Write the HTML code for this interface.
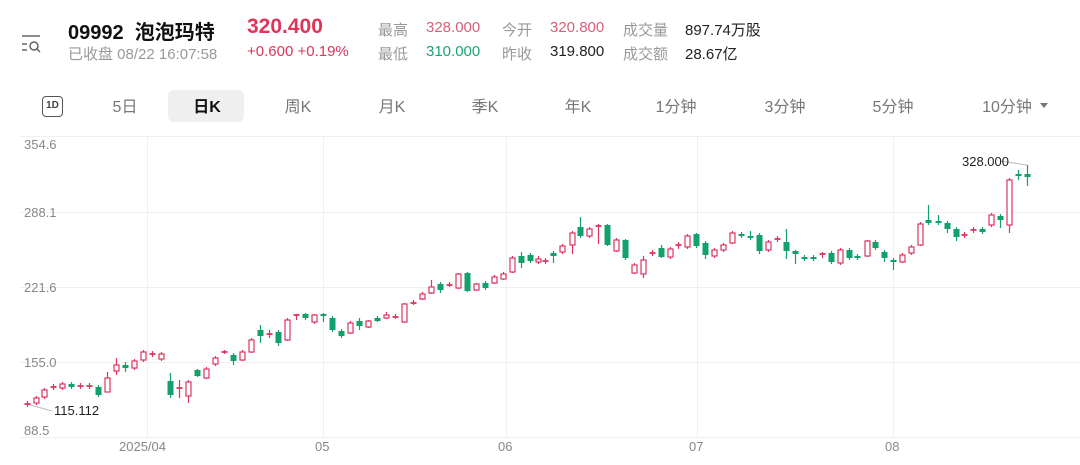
<!DOCTYPE html>
<html><head><meta charset="utf-8"><style>
*{margin:0;padding:0;box-sizing:border-box}
body{width:1080px;height:465px;background:#fff;font-family:"Liberation Sans","Noto Sans CJK SC",sans-serif;position:relative;overflow:hidden;color:#222}
.a{position:absolute;white-space:nowrap}
.g{color:#999}.red{color:#e0345a}.grn{color:#1aa474}
.tab{position:absolute;top:93px;font-size:16px;color:#777;transform:translateX(-50%)}
.ax{position:absolute;font-size:13px;color:#888}
</style></head><body>
<svg class="a" style="left:20px;top:34px" width="24" height="20" viewBox="0 0 24 20"><g stroke="#666" stroke-width="1.5" fill="none"><line x1="2" y1="2" x2="20" y2="2"/><line x1="2" y1="10" x2="7" y2="10"/><line x1="2" y1="16" x2="7" y2="16"/><circle cx="14" cy="12" r="4"/><line x1="17" y1="15" x2="20" y2="18"/></g></svg>
<div class="a" style="left:68px;top:16px;font-size:20px;font-weight:bold;color:#111">09992&nbsp; 泡泡玛特</div>
<div class="a red" style="left:247px;top:15px;font-size:21px;font-weight:bold">320.400</div>
<div class="a g" style="left:68px;top:43px;font-size:15px">已收盘 08/22 16:07:58</div>
<div class="a red" style="left:247px;top:43px;font-size:15px">+0.600 +0.19%</div>
<div class="a g" style="left:378px;top:19px;font-size:15px">最高</div>
<div class="a" style="left:426px;top:19px;font-size:15px;color:#d9607a">328.000</div>
<div class="a g" style="left:378px;top:43px;font-size:15px">最低</div>
<div class="a grn" style="left:426px;top:43px;font-size:15px">310.000</div>
<div class="a g" style="left:502px;top:19px;font-size:15px">今开</div>
<div class="a" style="left:550px;top:19px;font-size:15px;color:#d9607a">320.800</div>
<div class="a g" style="left:502px;top:43px;font-size:15px">昨收</div>
<div class="a" style="left:550px;top:43px;font-size:15px">319.800</div>
<div class="a g" style="left:623px;top:19px;font-size:15px">成交量</div>
<div class="a" style="left:685px;top:19px;font-size:15px">897.74万股</div>
<div class="a g" style="left:623px;top:43px;font-size:15px">成交额</div>
<div class="a" style="left:685px;top:43px;font-size:15px">28.67亿</div>
<div class="a" style="left:42px;top:96px;width:21px;height:21px;border:1.5px solid #555;border-radius:4px;font-size:10px;font-weight:bold;text-align:center;line-height:18px;color:#444">1D</div>
<div class="a" style="left:168px;top:90px;width:76px;height:32px;background:#efefef;border-radius:6px"></div>
<div class="tab" style="left:125px">5日</div>
<div class="tab" style="left:207px;color:#111;font-weight:bold">日K</div>
<div class="tab" style="left:298px">周K</div>
<div class="tab" style="left:392px">月K</div>
<div class="tab" style="left:485px">季K</div>
<div class="tab" style="left:578px">年K</div>
<div class="tab" style="left:676px">1分钟</div>
<div class="tab" style="left:785px">3分钟</div>
<div class="tab" style="left:893px">5分钟</div>
<div class="tab" style="left:1007px">10分钟</div>
<div class="a" style="left:1040px;top:103px;border-left:4px solid transparent;border-right:4px solid transparent;border-top:5px solid #777"></div>

<svg class="a" style="left:0;top:0" width="1080" height="465">
<g stroke="#f0f0f0" stroke-width="1">
<line x1="20" y1="136.5" x2="1080" y2="136.5"/><line x1="20" y1="212.5" x2="1080" y2="212.5"/><line x1="20" y1="287.5" x2="1080" y2="287.5"/><line x1="20" y1="362.5" x2="1080" y2="362.5"/><line x1="20" y1="437.5" x2="1080" y2="437.5"/>
<line x1="147.5" y1="136" x2="147.5" y2="437"/><line x1="323.5" y1="136" x2="323.5" y2="437"/><line x1="506.5" y1="136" x2="506.5" y2="437"/><line x1="697.5" y1="136" x2="697.5" y2="437"/><line x1="893.5" y1="136" x2="893.5" y2="437"/>
</g>
<line x1="27" y1="404" x2="52" y2="411" stroke="#bbb"/>
<line x1="1000" y1="161" x2="1027" y2="165" stroke="#bbb"/>
<g id="c"></g>
</svg>
<div class="ax" style="left:24px;top:137px">354.6</div>
<div class="ax" style="left:24px;top:205px">288.1</div>
<div class="ax" style="left:24px;top:280px">221.6</div>
<div class="ax" style="left:24px;top:355px">155.0</div>
<div class="ax" style="left:24px;top:423px">88.5</div>
<div class="a" style="left:54px;top:403px;font-size:13px;color:#222">115.112</div>
<div class="a" style="left:962px;top:154px;font-size:13px;color:#222">328.000</div>
<div class="ax" style="left:119px;top:439px">2025/04</div>
<div class="ax" style="left:315px;top:439px">05</div>
<div class="ax" style="left:498px;top:439px">06</div>
<div class="ax" style="left:689px;top:439px">07</div>
<div class="ax" style="left:885px;top:439px">08</div>
<script>
var d=[
[27,'r',404,404,401,407],[36,'r',398,403,396,405],[44,'r',390,397,388,399],[53,'r',387,387,384,390],[62,'r',384,388,382,390],[71,'g',384,387,382,389],[80,'r',386,386,383,389],[89,'r',386,386,383,389],[98,'g',387,395,385,397],[107,'r',378,392,372,392],[116,'r',365,371,358,375],[125,'g',365,368,362,372],[134,'r',361,368,359,370],[143,'r',352,360,350,362],[152,'r',354,354,351,357],[161,'r',354,359,352,361],
[170,'g',381,395,373,398],[179,'r',388,388,380,398],[188,'r',382,396,380,403],[197,'g',370,376,369,377],[206,'r',369,378,367,379],[215,'r',358,364,356,366],[224,'r',352,352,350,354],[233,'g',355,361,353,365],[242,'r',352,360,350,361],[251,'r',340,352,338,353],[260,'g',330,336,325,343],[269,'r',334,334,330,338],[278,'g',332,343,330,346],[287,'r',320,340,318,341],[296,'r',315,315,314,320],[305,'g',314,318,313,320],[314,'r',315,322,314,324],[323,'g',314,316,313,322],[332,'g',318,330,316,332],[341,'g',331,336,329,338],[350,'r',323,333,321,334],[359,'g',321,326,318,330],[368,'r',321,327,320,328],[377,'g',318,321,316,322],[386,'r',315,318,312,319],[395,'r',317,317,314,319],[404,'r',304,322,303,323],[413,'r',303,303,300,305],[422,'r',294,299,292,300],[431,'r',287,293,280,294],[440,'g',284,290,282,293],[449,'r',285,285,282,287],[458,'r',274,288,273,289],[467,'g',273,291,272,292],[476,'r',284,290,283,291],[485,'g',283,288,281,290],[494,'r',277,283,275,284],[503,'r',274,279,272,280],[512,'r',258,272,256,273],[521,'g',256,263,252,268],[530,'g',255,261,253,263],[538,'r',259,262,256,264],
[545,'r',261,261,258,264],[553,'g',253,256,251,263],[562,'r',246,252,244,254],[572,'r',233,245,231,254],[580,'g',227,236,217,238],[589,'r',229,236,227,238],[598,'r',226,226,224,244],[607,'g',225,245,224,246],[616,'r',240,251,238,252],[625,'g',240,258,239,260],[634,'r',265,273,263,274],[643,'r',260,274,256,278],[652,'r',253,253,250,256],[661,'g',248,257,245,258],[670,'r',249,257,247,259],[678,'r',245,245,242,249],[687,'r',236,247,234,249],[696,'g',234,246,233,248],[705,'g',243,255,241,259],[714,'r',250,256,248,258],[723,'r',245,250,243,252],[732,'r',233,243,231,244],[741,'g',234,236,232,238],[750,'g',236,238,231,240],[759,'g',235,251,233,254],[768,'r',242,250,240,252],[777,'r',239,239,236,242],[786,'g',242,251,229,259],[795,'g',251,254,250,264],[804,'g',257,259,255,261],[813,'g',257,259,255,261],[822,'r',254,254,252,258],[831,'g',253,262,251,264],[840,'r',250,263,248,265],[849,'g',250,258,248,260],[857,'g',256,258,254,260],[867,'r',241,256,240,257],[875,'g',242,248,240,250],[884,'g',252,258,250,262],[893,'g',260,262,258,270],[902,'r',255,262,253,263],[911,'r',247,253,245,255],[920,'r',224,245,222,246],[928,'g',220,223,205,225],[938,'g',221,223,215,225],[947,'g',223,229,221,233],[956,'g',229,237,227,241],[964,'r',235,235,232,238],[973,'r',230,230,227,233],[982,'g',229,232,227,234],[991,'r',215,225,213,227],[1000,'g',216,220,214,228],[1009,'r',180,225,178,233],[1018,'g',174,176,170,180],[1027,'g',174,177,165,186]];
var s='',R='#dc3560',G='#12a06e';
d.forEach(function(c){var x=c[0],col=c[1]=='r'?R:G;
s+='<line x1="'+(x+.5)+'" y1="'+c[4]+'" x2="'+(x+.5)+'" y2="'+c[5]+'" stroke="'+col+'" stroke-width="1.2"/>';
var h=c[3]-c[2];
if(h<2){s+='<line x1="'+(x-2.5)+'" y1="'+c[2]+'" x2="'+(x+3.5)+'" y2="'+c[2]+'" stroke="'+col+'" stroke-width="1.8"/>';}
else if(c[1]=='r'){s+='<rect x="'+(x-2)+'" y="'+c[2]+'" width="5" height="'+h+'" fill="#fff" stroke="'+R+'" stroke-width="1.2"/>';}
else{s+='<rect x="'+(x-2.5)+'" y="'+c[2]+'" width="6" height="'+h+'" fill="'+G+'"/>';}
});
document.getElementById('c').innerHTML=s;
</script>
</body></html>
